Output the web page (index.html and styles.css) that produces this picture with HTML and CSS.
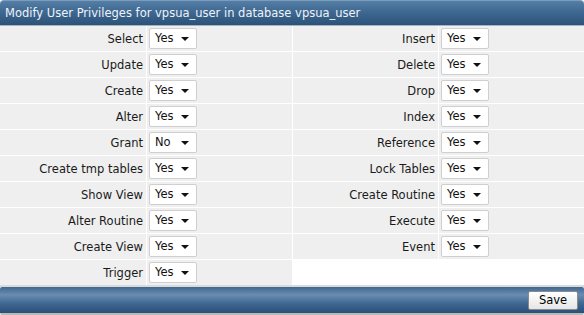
FILE: index.html
```html
<!DOCTYPE html>
<html>
<head>
<meta charset="utf-8">
<link rel="stylesheet" href="styles.css">
</head>
<body>
<div class="panel">
  <div class="header">Modify User Privileges for vpsua_user in database vpsua_user</div>
  <div class="grid">
    <div class="lbl">Select</div><div class="val"><span class="sel">Yes</span></div>
    <div class="lbl">Insert</div><div class="val"><span class="sel">Yes</span></div>
    <div class="lbl">Update</div><div class="val"><span class="sel">Yes</span></div>
    <div class="lbl">Delete</div><div class="val"><span class="sel">Yes</span></div>
    <div class="lbl">Create</div><div class="val"><span class="sel">Yes</span></div>
    <div class="lbl">Drop</div><div class="val"><span class="sel">Yes</span></div>
    <div class="lbl">Alter</div><div class="val"><span class="sel">Yes</span></div>
    <div class="lbl">Index</div><div class="val"><span class="sel">Yes</span></div>
    <div class="lbl">Grant</div><div class="val"><span class="sel">No</span></div>
    <div class="lbl">Reference</div><div class="val"><span class="sel">Yes</span></div>
    <div class="lbl">Create tmp tables</div><div class="val"><span class="sel">Yes</span></div>
    <div class="lbl">Lock Tables</div><div class="val"><span class="sel">Yes</span></div>
    <div class="lbl">Show View</div><div class="val"><span class="sel">Yes</span></div>
    <div class="lbl">Create Routine</div><div class="val"><span class="sel">Yes</span></div>
    <div class="lbl">Alter Routine</div><div class="val"><span class="sel">Yes</span></div>
    <div class="lbl">Execute</div><div class="val"><span class="sel">Yes</span></div>
    <div class="lbl">Create View</div><div class="val"><span class="sel">Yes</span></div>
    <div class="lbl">Event</div><div class="val"><span class="sel">Yes</span></div>
    <div class="lbl">Trigger</div><div class="val"><span class="sel">Yes</span></div>
    <div class="empty"></div>
  </div>
  <div class="footer"><button class="save">Save</button></div>
</div>
</body>
</html>
```
FILE: styles.css
```css
html, body {
  margin: 0;
  padding: 0;
  background: #ffffff;
}
body {
  font-family: "DejaVu Sans", Verdana, sans-serif;
  font-size: 11.5px;
  color: #1a1a1a;
}
.panel {
  width: 584px;
}
.header {
  height: 24px;
  line-height: 24px;
  padding-left: 5px;
  color: #eef3f8;
  font-size: 11.5px;
  border-radius: 4px 4px 0 0;
  border-top: 1px solid #7a9cbd;
  border-bottom: 1px solid #a8b4c0;
  background: linear-gradient(#557ea5, #3d6690 50%, #2c5278);
}
.grid {
  display: grid;
  grid-template-columns: 146px 145px 145px 145px;
  grid-auto-rows: 25px;
  gap: 1px;
  background: #ffffff;
  border-bottom: 2px solid #dadada;
}
.lbl {
  background: #efefef;
  text-align: right;
  padding-right: 3px;
  line-height: 26px;
  white-space: nowrap;
}
.val {
  background: #efefef;
  display: flex;
  align-items: center;
  padding-left: 2px;
}
.empty {
  grid-column: span 2;
  background: #ffffff;
}
.sel {
  position: relative;
  box-sizing: border-box;
  width: 48px;
  height: 21px;
  line-height: 19px;
  padding-left: 5px;
  background: #ffffff;
  border: 1px solid #cfcfcf;
  border-radius: 2px;
  font-size: 11.5px;
  color: #111;
}
.sel::after {
  content: "";
  position: absolute;
  right: 7px;
  top: 8px;
  border-left: 4px solid transparent;
  border-right: 4px solid transparent;
  border-top: 4px solid #111;
}
.footer {
  height: 26px;
  border-radius: 2px;
  border-bottom: 2px solid #b9b9b9;
  background: linear-gradient(#3f6790, #6a8db0 30%, #3d6690 65%, #2b5078);
  display: flex;
  justify-content: flex-end;
  align-items: center;
  padding-right: 6px;
}
.save {
  font-family: "DejaVu Sans", Verdana, sans-serif;
  font-size: 11.5px;
  color: #000;
  width: 50px;
  height: 19px;
  padding: 0;
  border: 1px solid #8a8a8a;
  border-radius: 2px;
  background: linear-gradient(#ffffff, #e6e6e6);
}
```
